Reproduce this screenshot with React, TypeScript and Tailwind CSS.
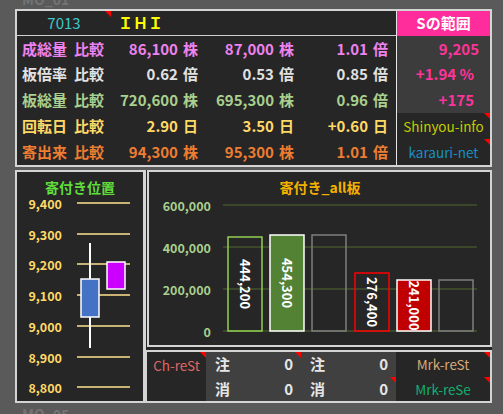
import React from "react";

type Row = {
  label: string;
  a: string;
  au: string;
  b: string;
  bu: string;
  c: string;
  cu: string;
  color: string;
};

const rows: Row[] = [
  { label: "成総量", a: "86,100", au: "株", b: "87,000", bu: "株", c: "1.01", cu: "倍", color: "text-[#ee82ee]" },
  { label: "板倍率", a: "0.62", au: "倍", b: "0.53", bu: "倍", c: "0.85", cu: "倍", color: "text-[#e2e2e2]" },
  { label: "板総量", a: "720,600", au: "株", b: "695,300", bu: "株", c: "0.96", cu: "倍", color: "text-[#a9d08e]" },
  { label: "回転日", a: "2.90", au: "日", b: "3.50", bu: "日", c: "+0.60", cu: "日", color: "text-[#ffd966]" },
  { label: "寄出来", a: "94,300", au: "株", b: "95,300", bu: "株", c: "1.01", cu: "倍", color: "text-[#ed7d31]" },
];

const priceTicks: [string, number][] = [
  ["9,400", 31],
  ["9,300", 62],
  ["9,200", 92],
  ["9,100", 123],
  ["9,000", 154],
  ["8,900", 185],
  ["8,800", 215],
];

const volTicks: [string, number][] = [
  ["600,000", 33],
  ["400,000", 75],
  ["200,000", 117],
  ["0", 159],
];

// bar left edge, top edge, fill, outline, value label
const bars: { x: number; top: number; fill: string; stroke: string; label?: string }[] = [
  { x: 79, top: 65, fill: "none", stroke: "#92d050", label: "444,200" },
  { x: 121, top: 63, fill: "#548235", stroke: "#ffffff", label: "454,300" },
  { x: 163, top: 63, fill: "none", stroke: "#7f7f7f" },
  { x: 206, top: 101, fill: "none", stroke: "#ff0000", label: "276,400" },
  { x: 248, top: 108, fill: "#c00000", stroke: "#ffffff", label: "241,000" },
  { x: 290, top: 108, fill: "none", stroke: "#7f7f7f" },
];

function Tri() {
  return (
    <span className="absolute right-0 top-0 h-0 w-0 border-l-[6px] border-t-[6px] border-l-transparent border-t-[#ff0000]" />
  );
}

function Val({ n, u }: { n: string; u: string }) {
  return (
    <div className="flex items-center justify-end whitespace-nowrap">
      <span>{n}</span>
      <span className="ml-[5px]">{u}</span>
    </div>
  );
}

function CountCell({ k, tri }: { k: string; tri?: boolean }) {
  return (
    <div className="relative flex items-center justify-between bg-[#404040] pl-[9px] pr-[8px] text-[15px] font-bold text-[#e6e6e6]">
      <span>{k}</span>
      <span>0</span>
      {tri && <Tri />}
    </div>
  );
}

export default function App() {
  return (
    <div className="relative h-[414px] w-[503px] overflow-hidden bg-[#5a5a5a] font-['Noto_Sans_CJK_JP','Noto_Sans',sans-serif]">
      <div className="flex h-[9px] items-end pl-[22px]">
        <div className="mb-[3px] text-[14px] font-bold leading-[14px] text-[#737373]">MO_01</div>
      </div>

      {/* top comparison table */}
      <div className="ml-[15px] flex h-[158px] w-[477px] border-2 border-[#d4d4d4] bg-[#262626]">
        <div className="flex w-[379px] flex-col">
          <div className="flex h-[25px] border-b border-[#cfcfcf] text-[15px] font-bold">
            <div className="relative flex w-[94px] items-center justify-center font-normal text-[#3cc8c8]">
              7013
              <Tri />
            </div>
            <div className="flex items-center pl-[7px] text-[#ffff00]">ＩＨＩ</div>
          </div>
          <div className="flex flex-1 flex-col">
            {rows.map((r) => (
              <div
                key={r.label}
                className={`grid flex-1 grid-cols-[88px_88px_96px_94px] items-center pl-[5px] text-[15px] font-bold ${r.color}`}
              >
                <div className="whitespace-nowrap">
                  {r.label}
                  <span className="ml-[7px]">比較</span>
                </div>
                <Val n={r.a} u={r.au} />
                <Val n={r.b} u={r.bu} />
                <Val n={r.c} u={r.cu} />
              </div>
            ))}
          </div>
        </div>

        <div className="flex w-[94px] flex-col border-l border-[#e6e6e6]">
          <div className="flex h-[25px] items-center justify-center bg-[#ff2d9b] text-[15px] font-bold text-white">
            Sの範囲
          </div>
          <div className="flex flex-1 flex-col text-[15px] font-bold text-[#ff3399]">
            <div className="flex flex-1 items-center justify-end bg-[#3c3c3c] pr-[11px]">9,205</div>
            <div className="flex flex-1 items-center justify-end bg-[#3c3c3c] pr-[16px]">+1.94 %</div>
            <div className="flex flex-1 items-center justify-end bg-[#3c3c3c] pr-[16px]">+175</div>
            <div className="relative flex flex-1 items-center justify-center text-[13.5px] font-normal text-[#c4cc00]">
              Shinyou-info
              <Tri />
            </div>
            <div className="relative flex flex-1 items-center justify-center text-[13.5px] font-normal text-[#1a8fc4]">
              karauri-net
              <Tri />
            </div>
          </div>
        </div>
      </div>

      <div className="mt-[3px] flex pl-[15px]">
        {/* opening position */}
        <div className="h-[233px] w-[130px] border-2 border-[#d4d4d4] bg-[#262626]">
          <svg width="126" height="229" className="block">
            <text x="63" y="15" textAnchor="middle" dominantBaseline="central" fill="#5fdc3c" fontSize="14" fontWeight="700">
              寄付き位置
            </text>
            {priceTicks.map(([t, y]) => (
              <g key={t}>
                <text x="45" y={y} textAnchor="end" dominantBaseline="central" fill="#ffd966" fontSize="12.5" fontWeight="700">
                  {t}
                </text>
                <line x1="60" x2="113" y1={y} y2={y} stroke="#ffe28f" strokeWidth="1.5" />
              </g>
            ))}
            <line x1="73" x2="73" y1="71" y2="176" stroke="#ffffff" strokeWidth="2" />
            <rect x="64" y="107" width="18" height="38" fill="#4472c4" stroke="#ffffff" strokeWidth="1.5" />
            <rect x="90" y="90" width="18" height="27" fill="#cc00ff" stroke="#ffffff" strokeWidth="1.5" />
          </svg>
        </div>

        <div className="flex h-[233px] w-[347px] flex-col border-l border-[#d4d4d4] bg-[#262626]">
          {/* all-board chart */}
          <div className="ml-[1px] h-[177px] border-2 border-[#d4d4d4]">
            <svg width="341" height="173" className="block">
              <text x="171" y="15" textAnchor="middle" dominantBaseline="central" fill="#f4b000" fontSize="14" fontWeight="700">
                寄付き_all板
              </text>
              {volTicks.map(([t, y]) => (
                <g key={t}>
                  <text x="62" y={y} textAnchor="end" dominantBaseline="central" fill="#a9d08e" fontSize="12.5" fontWeight="700">
                    {t}
                  </text>
                  <line x1="74" x2="328" y1={y} y2={y} stroke="#4f6a2c" strokeWidth="1" />
                </g>
              ))}
              {bars.map((b) => {
                const cx = b.x + 17;
                const cy = (b.top + 159) / 2;
                return (
                  <g key={b.x}>
                    <rect x={b.x} y={b.top} width="34" height={159 - b.top} fill={b.fill} stroke={b.stroke} strokeWidth="1.5" />
                    {b.label && (
                      <text
                        x={cx}
                        y={cy}
                        textAnchor="middle"
                        dominantBaseline="central"
                        fill="#ffffff"
                        fontSize="13"
                        fontWeight="700"
                        transform={`rotate(90 ${cx} ${cy})`}
                      >
                        {b.label}
                      </text>
                    )}
                  </g>
                );
              })}
            </svg>
          </div>

          {/* reset strip */}
          <div className="-ml-[1px] mt-[3px] grid h-[53px] w-[347px] grid-cols-[59px_95px_95px_94px] grid-rows-2 border-2 border-[#d4d4d4]">
            <div className="relative row-span-2 pt-[3px] text-center text-[13.5px] text-[#e06666]">
              Ch-reSt
              <Tri />
            </div>
            <CountCell k="注" tri />
            <CountCell k="注" />
            <div className="relative flex items-center justify-center text-[13.5px] text-[#d9a878]">
              Mrk-reSt
              <Tri />
            </div>
            <CountCell k="消" />
            <CountCell k="消" tri />
            <div className="relative flex items-center justify-center text-[13.5px] text-[#12b070]">
              Mrk-reSe
              <Tri />
            </div>
          </div>
        </div>
      </div>

      <div className="mt-[4px] pl-[22px] text-[14px] font-bold leading-[14px] text-[#737373]">MO_05</div>
    </div>
  );
}
